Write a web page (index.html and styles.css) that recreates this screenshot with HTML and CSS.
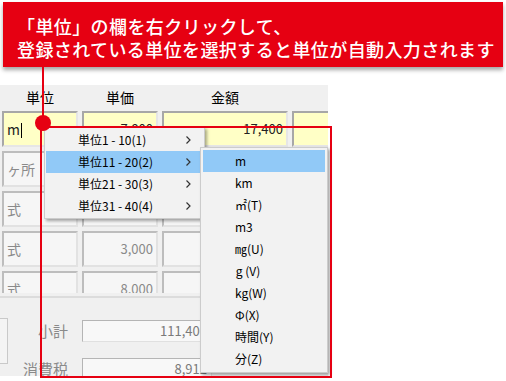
FILE: index.html
```html
<!DOCTYPE html>
<html lang="ja">
<head>
  <meta charset="UTF-8" />
  <title>単位の選択</title>
  <link rel="stylesheet" href="styles.css">
</head>
<body>
  <div class="stage">
    <div class="callout">
      <p>「単位」の欄を右クリックして、</p>
      <p>登録されている単位を選択すると単位が自動入力されます</p>
    </div>

    <div class="form">
      <div class="grid head">
        <div>単位</div>
        <div>単価</div>
        <div>金額</div>
        <div></div>
      </div>

      <div class="rows">
        <div class="grid row active">
          <div class="cell">m<span class="caret"></span></div>
          <div class="cell num">7,800</div>
          <div class="cell num">17,400</div>
          <div class="cell"></div>
        </div>
        <div class="grid row">
          <div class="cell">ヶ所</div>
          <div class="cell num"></div>
          <div class="cell num"></div>
          <div class="cell"></div>
        </div>
        <div class="grid row">
          <div class="cell">式</div>
          <div class="cell num"></div>
          <div class="cell num"></div>
          <div class="cell"></div>
        </div>
        <div class="grid row">
          <div class="cell">式</div>
          <div class="cell num">3,000</div>
          <div class="cell num"></div>
          <div class="cell"></div>
        </div>
        <div class="grid row">
          <div class="cell">式</div>
          <div class="cell num">8,000</div>
          <div class="cell num"></div>
          <div class="cell"></div>
        </div>
      </div>

      <div class="totals">
        <div class="side-btn"></div>
        <div class="total-list">
          <div class="total-row">
            <span class="total-label">小計</span>
            <div class="field">111,400</div>
          </div>
          <div class="total-row">
            <span class="total-label">消費税</span>
            <div class="field">8,912</div>
          </div>
        </div>
      </div>
    </div>

    <!-- context menu -->
    <ul class="menu main-menu">
      <li>単位1 - 10(1)<svg class="chev" width="5" height="8" viewBox="0 0 5 8"><polyline points="0.5,0.5 4,4 0.5,7.5" /></svg></li>
      <li class="hover">単位11 - 20(2)<svg class="chev" width="5" height="8" viewBox="0 0 5 8"><polyline points="0.5,0.5 4,4 0.5,7.5" /></svg></li>
      <li>単位21 - 30(3)<svg class="chev" width="5" height="8" viewBox="0 0 5 8"><polyline points="0.5,0.5 4,4 0.5,7.5" /></svg></li>
      <li>単位31 - 40(4)<svg class="chev" width="5" height="8" viewBox="0 0 5 8"><polyline points="0.5,0.5 4,4 0.5,7.5" /></svg></li>
    </ul>

    <ul class="menu sub-menu">
      <li class="hover">m</li>
      <li>km</li>
      <li>㎡(T)</li>
      <li>m3</li>
      <li>㎎(U)</li>
      <li>&#8202;g (V)</li>
      <li>kg(W)</li>
      <li>Φ(X)</li>
      <li>時間(Y)</li>
      <li>分(Z)</li>
    </ul>

    <!-- annotation -->
    <div class="pointer-line"></div>
    <div class="frame"></div>
    <div class="dot"></div>
  </div>
</body>
</html>
```

FILE: styles.css
```css
* {
  margin: 0;
  padding: 0;
  box-sizing: border-box;
}

body {
  background: #fff;
  font-family: "Noto Sans CJK JP", "Noto Sans", sans-serif;
  color: #000;
}

.stage {
  position: relative;
  width: 506px;
  height: 381px;
  overflow: hidden;
}

/* red callout */
.callout {
  margin: 2px 3px 0;
  height: 65px;
  padding: 13px 0 0 14px;
  background: #e60012;
  color: #fff;
  font-size: 18px;
  font-weight: 500;
  line-height: 23px;
  letter-spacing: 0.4px;
  box-shadow: 0 3px 4px rgba(0, 0, 0, 0.35);
  position: relative;
  z-index: 3;
}

/* form behind */
.form {
  margin-top: 18px;
  width: 328px;
  height: 291px;
  background: #f0f0f0;
  overflow: hidden;
}

.grid {
  display: grid;
  grid-template-columns: 76px 76px 126px 60px;
  column-gap: 4px;
  padding-left: 2px;
}

.head {
  height: 26px;
  line-height: 25px;
  font-size: 14px;
  text-align: center;
}

.rows {
  height: 182px;
  display: flex;
  flex-direction: column;
  gap: 4px;
  overflow: hidden;
}

.row {
  height: 36px;
  flex-shrink: 0;
}

.cell {
  height: 36px;
  line-height: 32px;
  padding: 0 3px;
  font-size: 14px;
  color: #8a8a8a;
  background: #f6f6f6;
  border: 2px solid;
  border-color: #bdbdbd #e2e2e2 #e2e2e2 #bdbdbd;
}

.cell.num {
  text-align: right;
  font-size: 13px;
}

.active .cell {
  background: #ffffc6;
  color: #222;
  border-color: #a7a7a7 #e6e6e6 #e6e6e6 #a7a7a7;
}

.caret {
  display: inline-block;
  width: 1px;
  height: 15px;
  margin-left: 1px;
  background: #000;
  vertical-align: -3px;
}

.totals {
  margin-top: 3px;
  border-top: 2px solid #dcdcdc;
  display: flex;
  padding-top: 20px;
}

.side-btn {
  width: 8px;
  height: 46px;
  background: #f4f4f4;
  border: 1px solid #c9c9c9;
  border-left: none;
}

.total-list {
  margin-top: 2px;
  display: flex;
  flex-direction: column;
  gap: 16px;
}

.total-row {
  display: flex;
  gap: 14px;
}

.total-label {
  width: 60px;
  text-align: right;
  font-size: 15px;
  line-height: 22px;
  color: #8a8a8a;
}

.field {
  width: 130px;
  height: 22px;
  padding-right: 4px;
  text-align: right;
  font-size: 13px;
  line-height: 20px;
  color: #7a7a7a;
  background: #f8f8f8;
  border: 1px solid;
  border-color: #b5b5b5 #e0e0e0 #e0e0e0 #b5b5b5;
}

/* context menus */
.menu {
  position: absolute;
  list-style: none;
  background: #f2f2f2;
  border: 1px solid #cccccc;
  box-shadow: 2px 2px 3px rgba(0, 0, 0, 0.35);
  font-size: 12px;
  color: #000;
}

.menu li {
  height: 22px;
  line-height: 22px;
  padding-left: 32px;
  white-space: pre;
}

.menu li.hover {
  background: #91c9f7;
}

.main-menu {
  left: 44px;
  top: 127px;
  width: 161px;
  padding: 1px;
  z-index: 1;
}

.main-menu li {
  display: flex;
  justify-content: space-between;
  align-items: center;
  padding-right: 12px;
}

.chev {
  fill: none;
  stroke: #333;
  stroke-width: 1.2;
}

.sub-menu {
  left: 200px;
  top: 147px;
  width: 128px;
  height: 226px;
  padding: 2px;
  z-index: 2;
}

/* annotation overlay */
.pointer-line {
  position: absolute;
  left: 42px;
  top: 66px;
  width: 2px;
  height: 57px;
  background: #e60012;
  z-index: 4;
}

.frame {
  position: absolute;
  left: 40px;
  top: 126px;
  width: 292px;
  height: 252px;
  border: 2px solid #e60012;
  z-index: 4;
}

.dot {
  position: absolute;
  left: 35px;
  top: 115px;
  width: 16px;
  height: 16px;
  border-radius: 50%;
  background: #e60012;
  z-index: 5;
}
```
